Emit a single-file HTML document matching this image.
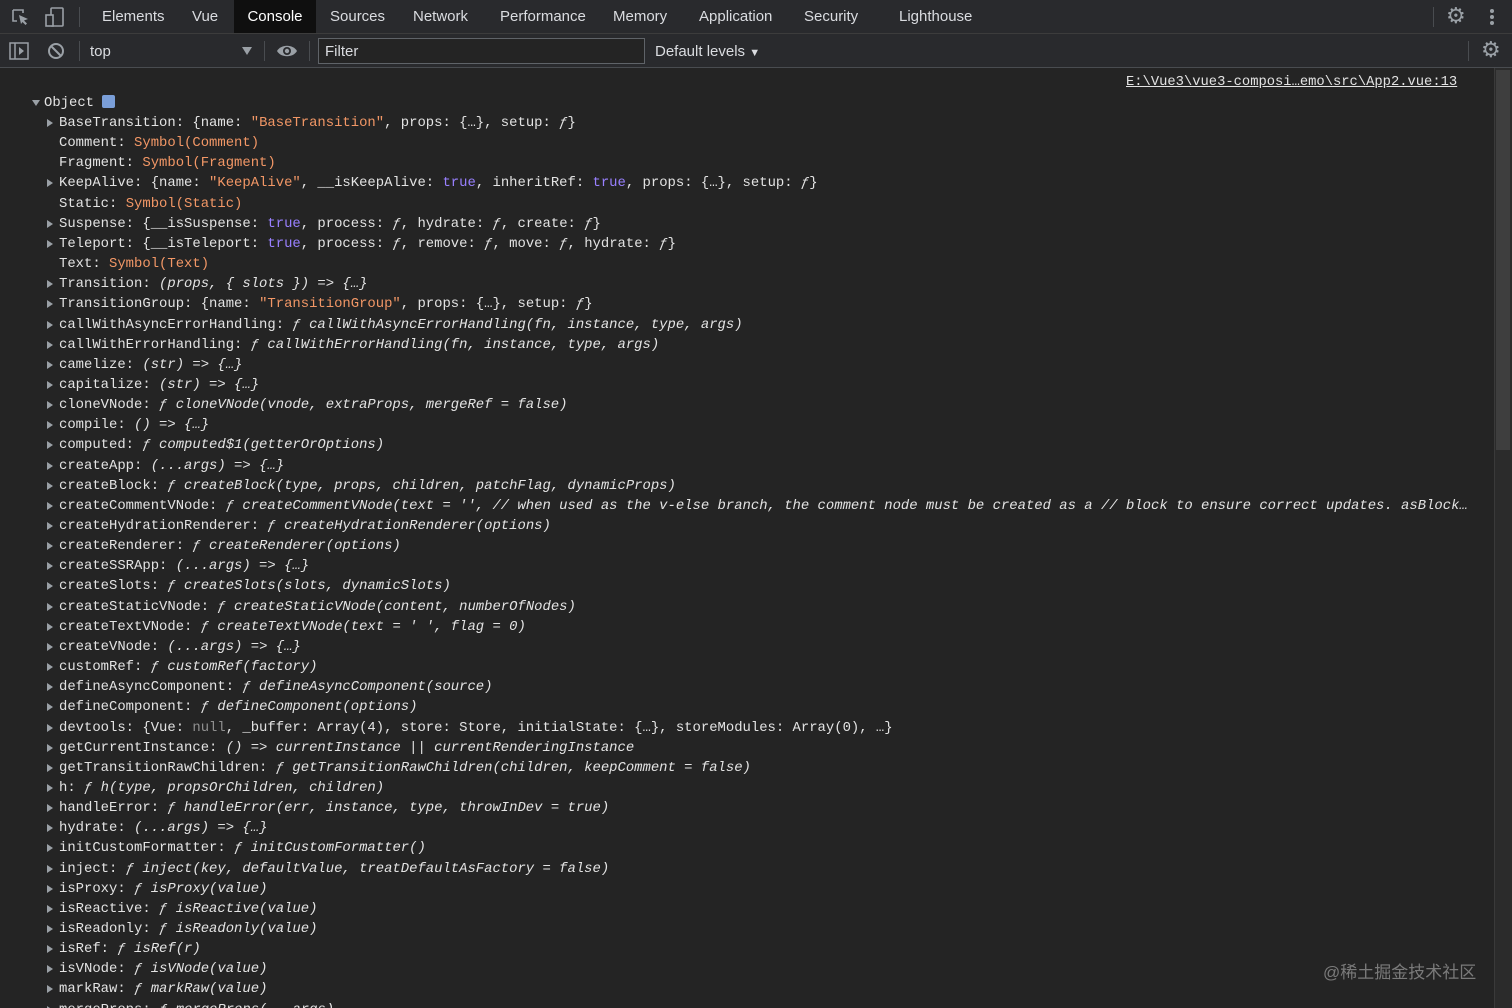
<!DOCTYPE html>
<html style="overflow:hidden;height:1008px"><head><meta charset="utf-8"><style>
body{margin:0;width:1512px;height:1008px;background:#242424;overflow:hidden;font-family:"Liberation Sans",sans-serif;color:#e8eaed;position:relative}
.bar1{position:absolute;left:0;top:0;width:1512px;height:33px;background:#292a2d;border-bottom:1px solid #3c3c3c}
.bar2{position:absolute;left:0;top:34px;width:1512px;height:33px;background:#292a2d;border-bottom:1px solid #494c50}
.tab{position:absolute;top:0;height:33px;line-height:34px;font-size:15px;color:#dadce0}
.sep{position:absolute;width:1px;background:#494c50}
.ln{position:absolute;left:59px;height:20px;line-height:20px;font-family:"Liberation Mono",monospace;font-size:13.9px;white-space:pre;color:#e3e3e3}
.tri{position:absolute;left:-12px;top:6px;width:0;height:0;border-left:6px solid #9aa0a6;border-top:4px solid transparent;border-bottom:4px solid transparent}
.s{color:#f29766}.k{color:#9980ff}.n{color:#8f8f8f}.i{font-style:italic}
.sb{position:absolute;left:1494px;top:68px;width:18px;height:940px;background:#2b2b2b;border-left:1px solid #3a3a3a}
.thumb{position:absolute;left:1496px;top:70px;width:14px;height:380px;background:#3e3e3e}
</style></head><body>
<div class="bar1">
<svg style="position:absolute;left:10px;top:7px" width="20" height="20" viewBox="0 0 20 20"><path d="M3 3h10v3M3 3v11h4" fill="none" stroke="#9aa0a6" stroke-width="1.6"/><path d="M9 8l9 4-4 1.5 3 3-1.5 1.5-3-3L11 17z" fill="#9aa0a6"/></svg>
<svg style="position:absolute;left:44px;top:6px" width="22" height="22" viewBox="0 0 22 22"><rect x="7" y="2" width="12" height="18" rx="1" fill="none" stroke="#9aa0a6" stroke-width="1.6"/><rect x="2" y="9" width="7" height="11" fill="#292a2d" stroke="#9aa0a6" stroke-width="1.6"/></svg>
<div class="sep" style="left:79px;top:7px;height:20px"></div>
<div class="tab" style="left:102px">Elements</div>
<div class="tab" style="left:192px">Vue</div>
<div class="tab" style="left:234px;width:82px;background:#0f0f0f;text-align:center;color:#fff">Console</div>
<div class="tab" style="left:330px">Sources</div>
<div class="tab" style="left:413px">Network</div>
<div class="tab" style="left:500px">Performance</div>
<div class="tab" style="left:613px">Memory</div>
<div class="tab" style="left:699px">Application</div>
<div class="tab" style="left:804px">Security</div>
<div class="tab" style="left:899px">Lighthouse</div>
<div class="sep" style="left:1433px;top:7px;height:20px"></div>
<div style="position:absolute;left:1446px;top:5px;font-size:22px;color:#9aa0a6;line-height:22px">⚙</div>
<div style="position:absolute;left:1490px;top:9px;width:4px"><div style="width:4px;height:4px;border-radius:2px;background:#9aa0a6;margin-bottom:2px"></div><div style="width:4px;height:4px;border-radius:2px;background:#9aa0a6;margin-bottom:2px"></div><div style="width:4px;height:4px;border-radius:2px;background:#9aa0a6"></div></div>
</div>
<div class="bar2">
<svg style="position:absolute;left:9px;top:8px" width="20" height="18" viewBox="0 0 20 18"><rect x="1" y="1" width="18" height="16" fill="none" stroke="#9aa0a6" stroke-width="1.5"/><line x1="6" y1="1" x2="6" y2="17" stroke="#9aa0a6" stroke-width="1.5"/><path d="M10 5l5 4-5 4z" fill="#9aa0a6"/></svg>
<svg style="position:absolute;left:47px;top:8px" width="18" height="18" viewBox="0 0 18 18"><circle cx="9" cy="9" r="7" fill="none" stroke="#9aa0a6" stroke-width="2"/><line x1="4" y1="4" x2="14" y2="14" stroke="#9aa0a6" stroke-width="2"/></svg>
<div class="sep" style="left:79px;top:7px;height:20px"></div>
<div class="tab" style="left:90px;font-size:15px;top:1px">top</div>
<div style="position:absolute;left:242px;top:13px;border-top:8px solid #9aa0a6;border-left:5px solid transparent;border-right:5px solid transparent"></div>
<div class="sep" style="left:264px;top:7px;height:20px"></div>
<svg style="position:absolute;left:276px;top:9px" width="22" height="16" viewBox="0 0 22 16"><path d="M1 8C5 1 17 1 21 8C17 15 5 15 1 8z" fill="#9aa0a6"/><circle cx="11" cy="8" r="4" fill="#292a2d"/><circle cx="11" cy="8" r="2.2" fill="#9aa0a6"/></svg>
<div class="sep" style="left:309px;top:7px;height:20px"></div>
<div style="position:absolute;left:318px;top:4px;width:327px;height:26px;border:1px solid #5f6368;background:#242424;box-sizing:border-box"><span style="position:absolute;left:6px;top:4px;font-size:15px;color:#dadce0">Filter</span></div>
<div class="tab" style="left:655px;top:1px">Default levels <span style="font-size:11px">▼</span></div>
<div class="sep" style="left:1468px;top:7px;height:20px"></div>
<div style="position:absolute;left:1481px;top:5px;font-size:22px;color:#9aa0a6;line-height:22px">⚙</div>
</div>
<div class="sb"></div><div class="thumb"></div>
<div style="position:absolute;left:1126px;top:73px;font-family:'Liberation Mono',monospace;font-size:13.8px;color:#e3e3e3;text-decoration:underline;line-height:20px">E:\Vue3\vue3-composi…emo\src\App2.vue:13</div>
<div class="ln" style="left:44px;top:93px"><span style="position:absolute;left:-12px;top:7px;border-top:6px solid #9aa0a6;border-left:4px solid transparent;border-right:4px solid transparent"></span>Object <span style="display:inline-block;width:13px;height:13px;background:#8ab4f8;border-radius:2px;vertical-align:-2px;opacity:.85"></span></div>
<div id="L"></div>
<script>
var L=[
[1,'BaseTransition: {name: <span class=s>"BaseTransition"</span>, props: {…}, setup: <i>ƒ</i>}'],
[0,'Comment: <span class=s>Symbol(Comment)</span>'],
[0,'Fragment: <span class=s>Symbol(Fragment)</span>'],
[1,'KeepAlive: {name: <span class=s>"KeepAlive"</span>, __isKeepAlive: <span class=k>true</span>, inheritRef: <span class=k>true</span>, props: {…}, setup: <i>ƒ</i>}'],
[0,'Static: <span class=s>Symbol(Static)</span>'],
[1,'Suspense: {__isSuspense: <span class=k>true</span>, process: <i>ƒ</i>, hydrate: <i>ƒ</i>, create: <i>ƒ</i>}'],
[1,'Teleport: {__isTeleport: <span class=k>true</span>, process: <i>ƒ</i>, remove: <i>ƒ</i>, move: <i>ƒ</i>, hydrate: <i>ƒ</i>}'],
[0,'Text: <span class=s>Symbol(Text)</span>'],
[1,'Transition: <i>(props, { slots }) =&gt; {…}</i>'],
[1,'TransitionGroup: {name: <span class=s>"TransitionGroup"</span>, props: {…}, setup: <i>ƒ</i>}'],
[1,'callWithAsyncErrorHandling: <i>ƒ callWithAsyncErrorHandling(fn, instance, type, args)</i>'],
[1,'callWithErrorHandling: <i>ƒ callWithErrorHandling(fn, instance, type, args)</i>'],
[1,'camelize: <i>(str) =&gt; {…}</i>'],
[1,'capitalize: <i>(str) =&gt; {…}</i>'],
[1,'cloneVNode: <i>ƒ cloneVNode(vnode, extraProps, mergeRef = false)</i>'],
[1,'compile: <i>() =&gt; {…}</i>'],
[1,'computed: <i>ƒ computed$1(getterOrOptions)</i>'],
[1,'createApp: <i>(...args) =&gt; {…}</i>'],
[1,'createBlock: <i>ƒ createBlock(type, props, children, patchFlag, dynamicProps)</i>'],
[1,'createCommentVNode: <i>ƒ createCommentVNode(text = \'\', // when used as the v-else branch, the comment node must be created as a // block to ensure correct updates. asBlock…</i>'],
[1,'createHydrationRenderer: <i>ƒ createHydrationRenderer(options)</i>'],
[1,'createRenderer: <i>ƒ createRenderer(options)</i>'],
[1,'createSSRApp: <i>(...args) =&gt; {…}</i>'],
[1,'createSlots: <i>ƒ createSlots(slots, dynamicSlots)</i>'],
[1,'createStaticVNode: <i>ƒ createStaticVNode(content, numberOfNodes)</i>'],
[1,'createTextVNode: <i>ƒ createTextVNode(text = \' \', flag = 0)</i>'],
[1,'createVNode: <i>(...args) =&gt; {…}</i>'],
[1,'customRef: <i>ƒ customRef(factory)</i>'],
[1,'defineAsyncComponent: <i>ƒ defineAsyncComponent(source)</i>'],
[1,'defineComponent: <i>ƒ defineComponent(options)</i>'],
[1,'devtools: {Vue: <span class=n>null</span>, _buffer: Array(4), store: Store, initialState: {…}, storeModules: Array(0), …}'],
[1,'getCurrentInstance: <i>() =&gt; currentInstance || currentRenderingInstance</i>'],
[1,'getTransitionRawChildren: <i>ƒ getTransitionRawChildren(children, keepComment = false)</i>'],
[1,'h: <i>ƒ h(type, propsOrChildren, children)</i>'],
[1,'handleError: <i>ƒ handleError(err, instance, type, throwInDev = true)</i>'],
[1,'hydrate: <i>(...args) =&gt; {…}</i>'],
[1,'initCustomFormatter: <i>ƒ initCustomFormatter()</i>'],
[1,'inject: <i>ƒ inject(key, defaultValue, treatDefaultAsFactory = false)</i>'],
[1,'isProxy: <i>ƒ isProxy(value)</i>'],
[1,'isReactive: <i>ƒ isReactive(value)</i>'],
[1,'isReadonly: <i>ƒ isReadonly(value)</i>'],
[1,'isRef: <i>ƒ isRef(r)</i>'],
[1,'isVNode: <i>ƒ isVNode(value)</i>'],
[1,'markRaw: <i>ƒ markRaw(value)</i>'],
[1,'mergeProps: <i>ƒ mergeProps(...args)</i>']
];
var h='';for(var j=0;j<L.length;j++){h+='<div class="ln" style="top:'+(113+j*20.15).toFixed(2)+'px">'+(L[j][0]?'<span class="tri"></span>':'')+L[j][1]+'</div>';}
document.getElementById('L').innerHTML=h;
</script>
<div style="position:absolute;left:1323px;top:958px;font-family:'Liberation Sans','Noto Sans CJK SC',sans-serif;font-size:17px;color:#7a7a7a">@稀土掘金技术社区</div>
</body></html>
